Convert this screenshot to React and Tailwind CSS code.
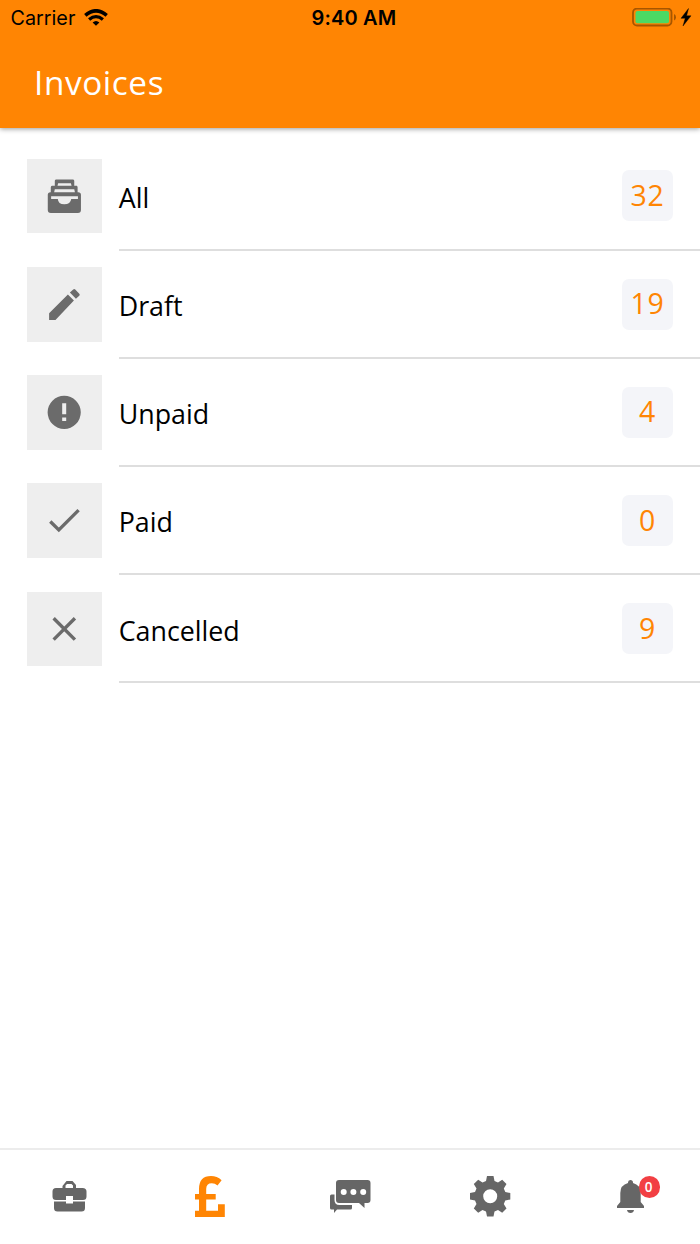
import React from "react";

const icons = {
  all: (
    <path
      fillRule="evenodd"
      d="M87 61H137Q140 61 141 65V80H148Q150 80 151 84V99H153Q161 99 161 107V152Q161 161 152 161H71Q62 161 62 152V107Q62 99 70 99H71V84Q72 80 75 80H83V65Q84 61 87 61ZM93 72L91 80H133L131 72ZM83 90L81 99H143L141 90ZM72 111V119H92Q93 135 111 135Q130 135 132 119H152V111Z"
    />
  ),
  draft: (
    <path d="M122 82L140 100L85 158H66V138ZM128 76L138 67Q141 64 144 67L156 80Q159 83 156 86L146 95Z" />
  ),
  unpaid: (
    <path
      fillRule="evenodd"
      d="M111 62A49.5 49.5 0 1 1 111 161A49.5 49.5 0 1 1 111 62ZM105 84V117H117V84ZM105 127V137H117V127Z"
    />
  ),
  paid: <path d="M69.5 115L95 140L154 81" fill="none" stroke="currentColor" strokeWidth="10" />,
  cancelled: (
    <path d="M79.5 78.5L143 142M143 78.5L79.5 142" fill="none" stroke="currentColor" strokeWidth="10" />
  ),
};

const rows = [
  { id: "all", label: "All", count: 32 },
  { id: "draft", label: "Draft", count: 19 },
  { id: "unpaid", label: "Unpaid", count: 4 },
  { id: "paid", label: "Paid", count: 0 },
  { id: "cancelled", label: "Cancelled", count: 9 },
];

function StatusBar() {
  return (
    <div className="grid h-9 grid-cols-3 items-center text-black">
      <div className="flex items-center gap-[9px] pl-[10.5px]">
        <span className="font-['Inter',sans-serif] text-[19.8px] leading-9">Carrier</span>
        <svg className="h-[18px] w-6" viewBox="0 0 24 18" fill="none" stroke="currentColor">
          <path d="M1.3 6.3Q12 -2.7 22.7 6.3" strokeWidth="3.6" />
          <path d="M5.1 10.5Q12 4.7 18.9 10.5" strokeWidth="3.3" />
          <path d="M8.6 13.5Q12 10.3 15.4 13.5L12 16.8Z" fill="currentColor" stroke="none" />
        </svg>
      </div>
      <div className="pl-[8px] text-center font-['Inter',sans-serif] text-[20px] font-semibold leading-9 tracking-[0.15px]">
        9:40 AM
      </div>
      <div className="flex items-center justify-end pr-2">
        <svg className="h-5 w-[60px]" viewBox="0 0 60 20">
          <rect x="1" y="0.5" width="38.5" height="17" rx="4" fill="none" stroke="#a65600" strokeWidth="1.8" />
          <rect x="3.5" y="2.9" width="33.5" height="12.4" rx="2" fill="#4cd964" />
          <path d="M42 6Q44 7 44 9.2Q44 11.5 42 12.5Z" fill="#a65600" />
          <path d="M56.5 0.5L49 10.3H53.2L51 18L59 7.8H54.6Z" fill="#000" stroke="#000" strokeWidth="0.4" />
        </svg>
      </div>
    </div>
  );
}

function InvoiceRow({ id, label, count }) {
  return (
    <li className="flex h-[108.15px] pl-[27.3px]">
      <div className="mt-[16.6px] size-[74.4px] shrink-0 bg-[#eeeeee] text-[#6b6b6b]">
        <svg className="size-full" viewBox="0 0 222 222" fill="currentColor">
          {icons[id]}
        </svg>
      </div>
      <div className="ml-[17px] flex flex-1 items-center justify-between border-b-2 border-[#dedede] pr-[27px]">
        <span className="pt-[5px] text-[26.8px] leading-9 text-black">{label}</span>
        <span className="mt-px flex h-[51px] w-[51px] items-center justify-center rounded-[7px] bg-[#f4f5f9] pb-px text-[28.5px] leading-none tracking-[0.6px] text-[#ff8503]">
          {count}
        </span>
      </div>
    </li>
  );
}

function TabBar() {
  return (
    <nav className="grid h-24 grid-cols-5 border-t-2 border-[#ececec] bg-white text-[#666666]">
      <div className="flex items-start justify-center">
        <svg className="-mt-[2px] h-24 w-[140px]" viewBox="0 0 140 96" fill="currentColor">
          <path
            fillRule="evenodd"
            d="M62.5 40V38L66.5 33H72.5L76 37V40H82.5Q86.5 40 86.5 43.5V48.5Q86.5 52 83 52H73V48H66V52H56Q52.5 52 52.5 48.5V43.5Q52.5 40 56 40ZM65.5 40H73V37.5L71.5 36H67L65.5 37.5Z"
          />
          <path d="M54 53.5H66V55.5H73V53.5H85V60Q85 63.5 81.5 63.5H57.5Q54 63.5 54 60Z" />
        </svg>
      </div>
      <div className="flex items-start justify-center text-[#ff8503]">
        <svg className="-mt-[2px] h-24 w-[140px]" viewBox="0 0 140 96" fill="currentColor">
          <path d="M55 62.7H59V51.5H55V46H59V41Q59 28 71 28Q77 28 81.6 32.2L77.5 37.6Q75 35.2 71.8 35.2Q66.2 35.2 66.2 41V46H75.7V51.5H66.2V62.7H78V56.3H84.8V69H55Z" />
        </svg>
      </div>
      <div className="flex items-start justify-center">
        <svg className="-mt-[2px] h-24 w-[140px]" viewBox="0 0 140 96" fill="currentColor">
          <path
            fillRule="evenodd"
            d="M59 32H87.5Q90.5 32 90.5 35V52Q90.5 55 87.5 55H84.5V60L79 55H59Q56 55 56 52V35Q56 32 59 32ZM63.7 41A3 3 0 1 0 63.7 47A3 3 0 1 0 63.7 41ZM73.4 41A3 3 0 1 0 73.4 47A3 3 0 1 0 73.4 41ZM83.2 41A3 3 0 1 0 83.2 47A3 3 0 1 0 83.2 41Z"
          />
          <path d="M50 48Q50 46.5 51.5 46.5H54.5V52Q54.5 57 59.5 57H72V60Q72 61.5 70.5 61.5H57L54 65V61.5H51.5Q50 61.5 50 60Z" />
        </svg>
      </div>
      <div className="flex items-start justify-center">
        <svg className="-mt-[2px] h-24 w-[140px]" viewBox="0 0 140 96" fill="currentColor">
          <path
            fillRule="evenodd"
            d="M67 28H73.5L74.5 33L78 34.5L82.2 31.8L86.5 36L83.8 40.5L85.3 44L90.3 45V51.5L85.3 52.5L83.8 56L86.5 60.4L82.2 64.8L78 62L74.5 63.5L73.5 68.6H67L66 63.5L62.5 62L58.2 64.8L53.8 60.4L56.5 56L55 52.5L50 51.5V45L55 44L56.5 40.5L53.8 36L58.2 31.8L62.5 34.5L66 33ZM70.2 41.3A7 7 0 1 0 70.2 55.3A7 7 0 1 0 70.2 41.3Z"
          />
        </svg>
      </div>
      <div className="relative flex items-start justify-center">
        <svg className="-mt-[2px] h-24 w-[140px]" viewBox="0 0 140 96" fill="currentColor">
          <path d="M68 35V34.5Q68 32 70.3 32Q73 32 73 34.5V35Q80.7 37 80.7 45V54L84 58V60H57V58L60.3 54V45Q60.3 37 68 35Z" />
          <path d="M67 62H74Q73.5 65 70.5 65Q67.5 65 67 62Z" />
        </svg>
        <span className="absolute left-[79px] top-[26px] flex h-[22px] w-[21px] items-center justify-center rounded-full bg-[#f23f43] pr-[2px] pt-[2px] text-[13.5px] font-semibold leading-none text-white">
          0
        </span>
      </div>
    </nav>
  );
}

export default function App() {
  return (
    <div className="flex h-[1244px] w-[700px] flex-col overflow-hidden bg-white font-['Open_Sans',sans-serif]">
      <header className="h-[128.4px] shrink-0 bg-[#ff8503] shadow-[0_1px_5px_rgba(0,0,0,0.4)]">
        <StatusBar />
        <h1 className="pl-[34px] pt-[23px] text-[33.3px] font-normal leading-[46px] tracking-[0.6px] text-white">
          Invoices
        </h1>
      </header>
      <ul className="flex-1 pt-[14px]">
        {rows.map((row) => (
          <InvoiceRow key={row.id} {...row} />
        ))}
      </ul>
      <TabBar />
    </div>
  );
}
